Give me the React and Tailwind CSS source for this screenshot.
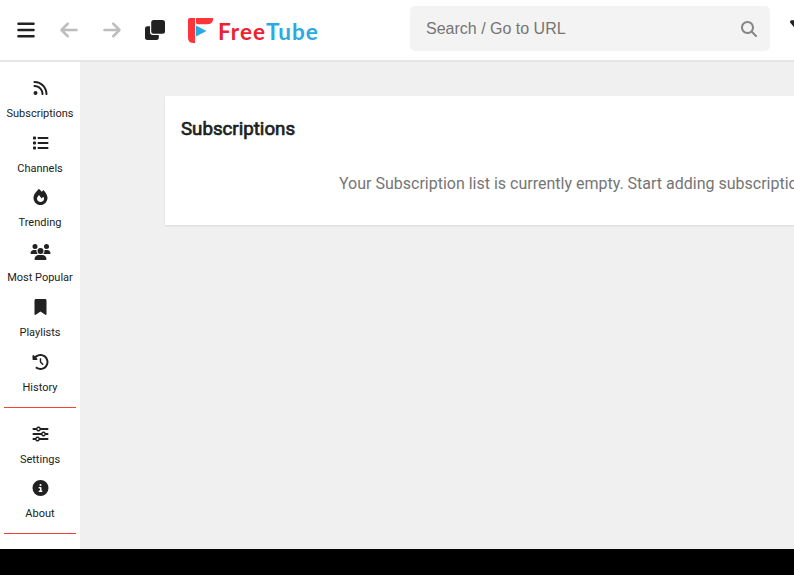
import { FaBars, FaArrowLeft, FaArrowRight, FaMagnifyingGlass, FaFilter, FaRss, FaList, FaFire, FaUsers, FaBookmark, FaClockRotateLeft, FaSliders, FaCircleInfo } from "react-icons/fa6";

const mainItems = [
  { label: "Subscriptions", Icon: FaRss },
  { label: "Channels", Icon: FaList },
  { label: "Trending", Icon: FaFire },
  { label: "Most Popular", Icon: FaUsers },
  { label: "Playlists", Icon: FaBookmark },
  { label: "History", Icon: FaClockRotateLeft },
];

const extraItems = [
  { label: "Settings", Icon: FaSliders },
  { label: "About", Icon: FaCircleInfo },
];

function NavItem({ label, Icon }) {
  return (
    <a className="flex h-[54.73px] flex-col items-center pt-[10px]">
      <Icon className="h-4 w-[21px] shrink-0" />
      <span className="mt-[11px] text-[11px] leading-[13px] whitespace-nowrap">{label}</span>
    </a>
  );
}

function CloneIcon() {
  return (
    <svg className="ml-[23px] h-5 w-5 shrink-0" viewBox="0 0 20 20" fill="currentColor">
      <path d="M5 6.200H2.500A2.500 2.500 0 0 0 0 8.700V17.500A2.500 2.500 0 0 0 2.500 20H11.300A2.500 2.500 0 0 0 13.800 17.500V15H8A3 3 0 0 1 5 12Z" />
      <rect x="6.200" width="13.800" height="13.800" rx="2.500" />
    </svg>
  );
}

function Logo() {
  return (
    <div className="ml-[23px] flex items-center">
      <svg className="h-[26px] w-[26px]" viewBox="0 0 26 26">
        <path d="M0 3Q0 1 2 1H7V26H5.500Q0 26 0 20.500Z" fill="#fd3538" />
        <path d="M8 1H25.300Q25 7.300 19 7.300H10Q8 7.300 8 5.500Z" fill="#fd3538" />
        <path d="M8 8.500L18.500 14L8 19.500Z" fill="#29abe2" />
      </svg>
      <span className="ml-1 flex pt-[5px] font-['Lato',sans-serif] text-[22.5px] leading-none font-bold tracking-[1px]">
        <span className="text-[#ed2130]">Free</span>
        <span className="text-[#29abe2]">Tube</span>
      </span>
    </div>
  );
}

export default function App() {
  return (
    <div className="flex h-[575px] w-[794px] flex-col overflow-hidden bg-black font-['Roboto',sans-serif] text-[#212121]">
      <header className="z-10 flex h-[60px] shrink-0 items-center bg-white shadow-[0_2px_0_#e5e5e5]">
        <FaBars className="ml-4 h-5 w-5 shrink-0" />
        <FaArrowLeft className="ml-[23px] h-5 w-5 shrink-0 text-[#bdbdbd]" />
        <FaArrowRight className="ml-[23px] h-5 w-5 shrink-0 text-[#bdbdbd]" />
        <CloneIcon />
        <Logo />
        <div className="mb-[3px] ml-auto flex h-[45px] w-[360px] shrink-0 items-center rounded-[5px] bg-[#f3f3f3] pr-[13px] pl-4">
          <span className="flex-1 font-['Liberation_Sans',Arial,sans-serif] text-base text-[#757575]">Search / Go to URL</span>
          <FaMagnifyingGlass className="h-4 w-4 text-[#868686]" />
        </div>
        <div className="mb-[3px] ml-5 w-1 shrink-0 overflow-hidden">
          <FaFilter className="mt-px h-5 w-5" />
        </div>
      </header>
      <div className="flex h-[489px] shrink-0">
        <nav className="w-20 shrink-0 bg-white pt-[10px]">
          {mainItems.map((item) => <NavItem key={item.label} {...item} />)}
          <div className="mx-1 mt-[8.4px] mb-2 h-px bg-[#f44336]" />
          {extraItems.map((item) => <NavItem key={item.label} {...item} />)}
          <div className="mx-1 mt-[8px] h-px bg-[#f44336]" />
        </nav>
        <main className="min-w-0 flex-1 overflow-hidden bg-[#f0f0f0] pt-9 pl-[85px]">
          <section className="h-[129px] w-[900px] bg-white p-4 shadow-[0_1px_2px_rgba(0,0,0,0.1)]">
            <h1 className="mt-[6px] text-[18.72px] leading-[22px] font-normal [-webkit-text-stroke:0.7px_currentColor]">Subscriptions</h1>
            <p className="mt-[33px] pl-[158px] text-base leading-[22px] whitespace-nowrap text-[#757575]">Your Subscription list is currently empty. Start adding subscriptions to see them here.</p>
          </section>
        </main>
      </div>
    </div>
  );
}
